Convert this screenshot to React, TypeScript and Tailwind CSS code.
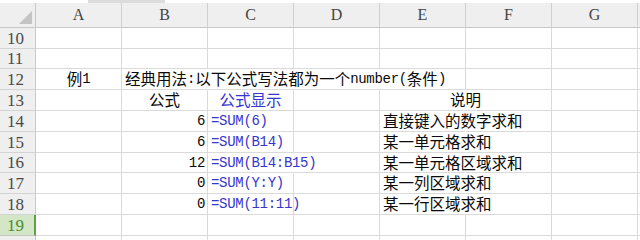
import React from "react";

function Txt({ s }: { s: string }) {
  const parts: { t: string; a: boolean }[] = [];
  for (const ch of s) {
    const a = ch.charCodeAt(0) < 128;
    const last = parts[parts.length - 1];
    if (last && last.a === a) last.t += ch;
    else parts.push({ t: ch, a });
  }
  return (
    <>
      {parts.map((p, i) =>
        p.a ? (
          <span key={i} className="font-['Liberation_Mono',monospace] text-[14px] tracking-[-0.3px]">
            {p.t}
          </span>
        ) : (
          <span key={i} className="font-['Noto_Sans_CJK_SC',sans-serif] text-[15.5px]">
            {p.t}
          </span>
        )
      )}
    </>
  );
}

type CellDef = {
  t?: string;
  align?: "l" | "c" | "r";
  blue?: boolean;
  noRight?: boolean;
  w?: number;
};

function Cell({ c }: { c: CellDef }) {
  const w = c.w === 172 ? "w-[172px]" : "w-[86px]";
  const al =
    c.align === "c" ? "justify-center" : c.align === "r" ? "justify-end pr-[2px]" : "justify-start pl-[3px]";
  return (
    <div
      className={`${w} shrink-0 h-full flex items-center whitespace-nowrap border-b border-[#dadada] ${
        c.noRight ? "border-r border-r-transparent" : "border-r border-r-[#dadada]"
      } ${al} ${c.blue ? "text-[#3535d0]" : "text-[#0a0a0a]"} leading-none`}
    >
      {c.t ? <Txt s={c.t} /> : null}
    </div>
  );
}

const E: CellDef = {};

const rows: { n: number; h: string; cells: CellDef[]; sel?: boolean; hide?: boolean }[] = [
  { n: 10, h: "h-[21px]", cells: [E, E, E, E, E, E, E] },
  { n: 11, h: "h-[20px]", cells: [E, E, E, E, E, E, E] },
  {
    n: 12,
    h: "h-[21px]",
    cells: [
      { t: "例1", align: "c" },
      { t: "经典用法:以下公式写法都为一个number(条件)", noRight: true },
      { noRight: true },
      { noRight: true },
      E,
      E,
      E,
    ],
  },
  {
    n: 13,
    h: "h-[21px]",
    cells: [E, { t: "公式", align: "c" }, { t: "公式显示", align: "c", blue: true }, E, { t: "说明", align: "c", w: 172 }, E],
  },
  {
    n: 14,
    h: "h-[21px]",
    cells: [E, { t: "6", align: "r" }, { t: "=SUM(6)", blue: true }, E, { t: "直接键入的数字求和", noRight: true }, E, E],
  },
  {
    n: 15,
    h: "h-[21px]",
    cells: [E, { t: "6", align: "r" }, { t: "=SUM(B14)", blue: true }, E, { t: "某一单元格求和", noRight: true }, E, E],
  },
  {
    n: 16,
    h: "h-[20px]",
    cells: [
      E,
      { t: "12", align: "r" },
      { t: "=SUM(B14:B15)", blue: true, noRight: true },
      E,
      { t: "某一单元格区域求和", noRight: true },
      E,
      E,
    ],
  },
  {
    n: 17,
    h: "h-[21px]",
    cells: [E, { t: "0", align: "r" }, { t: "=SUM(Y:Y)", blue: true }, E, { t: "某一列区域求和", noRight: true }, E, E],
  },
  {
    n: 18,
    h: "h-[21px]",
    cells: [E, { t: "0", align: "r" }, { t: "=SUM(11:11)", blue: true }, E, { t: "某一行区域求和", noRight: true }, E, E],
  },
  { n: 19, h: "h-[21px]", cells: [E, E, E, E, E, E, E], sel: true },
  { n: 20, h: "h-[21px]", cells: [E, E, E, E, E, E, E], hide: true },
];

export default function App() {
  return (
    <div className="w-[640px] h-[240px] overflow-hidden bg-white flex flex-col">
      <div className="h-[3px] shrink-0 flex">
        <div className="w-[88px]" />
        <div className="w-[77px] bg-[#dcdcdc]" />
      </div>
      <div className="h-[25px] shrink-0 flex bg-[#efefef] border-b border-[#c8c8c8]">
        <div className="w-[36px] shrink-0 h-full border-r border-[#c8c8c8] relative">
          <svg className="absolute left-[19px] top-[8px]" width="13" height="13" viewBox="0 0 13 13">
            <polygon points="13,0 13,13 0,13" fill="#c4c4c4" />
          </svg>
        </div>
        {["A", "B", "C", "D", "E", "F", "G"].map((l) => (
          <div
            key={l}
            className="w-[86px] shrink-0 h-full border-r border-[#d0d0d0] flex items-center justify-center font-['Liberation_Serif',serif] text-[16px] text-[#444]"
          >
            {l}
          </div>
        ))}
        <div className="flex-1" />
      </div>
      {rows.map((r) => (
        <div key={r.n} className={`${r.h} shrink-0 flex`}>
          <div
            className={`w-[36px] shrink-0 h-full flex items-center pl-[7px] font-['Liberation_Serif',serif] text-[17px] leading-none border-b ${
              r.sel
                ? "bg-[#d3e7c6] text-[#4c8a35] border-b-[#c8c8c8] border-r-2 border-r-[#5fa044]"
                : "bg-[#efefef] text-[#4a4a4a] border-b-[#d4d4d4] border-r border-r-[#c8c8c8]"
            }`}
          >
            {r.hide ? "" : r.n}
          </div>
          {r.cells.map((c, i) => (
            <Cell key={i} c={c} />
          ))}
          <div className="flex-1 h-full border-b border-[#dadada]" />
        </div>
      ))}
    </div>
  );
}
